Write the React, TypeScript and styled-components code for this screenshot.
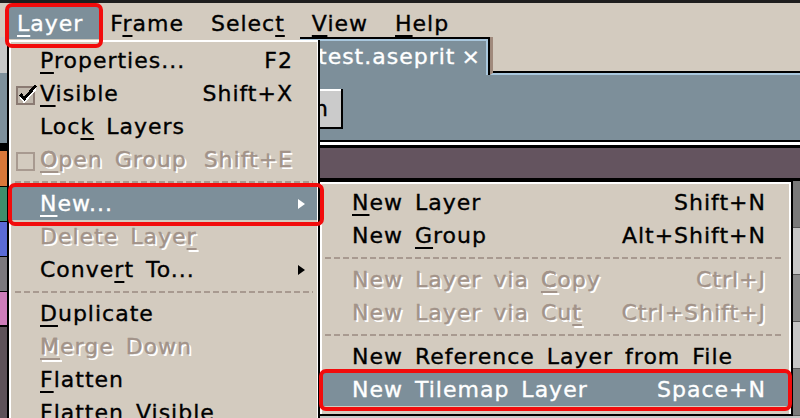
import React from 'react';
import styled, { createGlobalStyle } from 'styled-components';

const colors = {
  face: '#d3cbbf',
  slate: '#7d8f9a',
  ink: '#000000',
  paper: '#ffffff',
  muted: '#a29389',
  dash: '#a89a90',
  plum: '#64545f',
  frost: '#a9c7dd',
  shadow: '#a08a7c',
  red: '#f20c0c',
};

type Mnemonic = [string, string, string];

type Item =
  | 'sep'
  | {
      text: Mnemonic;
      shortcut?: string;
      arrow?: boolean;
      disabled?: boolean;
      check?: 'on' | 'off';
      active?: boolean;
    };

// split a label around the underlined letter
const mn = (label: string, idx = -1): Mnemonic =>
  idx < 0 ? [label, '', ''] : [label.slice(0, idx), label[idx], label.slice(idx + 1)];

const TITLES: { text: Mnemonic; active?: boolean }[] = [
  { text: mn('Layer', 0), active: true },
  { text: mn('Frame', 1) },
  { text: mn('Select', 5) },
  { text: mn('View', 0) },
  { text: mn('Help', 0) },
];

const LAYER_MENU: Item[] = [
  { text: mn('Properties...', 0), shortcut: 'F2' },
  { text: mn('Visible', 0), shortcut: 'Shift+X', check: 'on' },
  { text: mn('Lock Layers', 3) },
  { text: mn('Open Group', 0), shortcut: 'Shift+E', check: 'off', disabled: true },
  'sep',
  { text: mn('New...', 0), arrow: true, active: true },
  { text: mn('Delete Layer', 11), disabled: true },
  { text: mn('Convert To...', 5), arrow: true },
  'sep',
  { text: mn('Duplicate', 0) },
  { text: mn('Merge Down', 0), disabled: true },
  { text: mn('Flatten', 0) },
  { text: mn('Flatten Visible') },
];

const NEW_MENU: Item[] = [
  { text: mn('New Layer', 0), shortcut: 'Shift+N' },
  { text: mn('New Group', 4), shortcut: 'Alt+Shift+N' },
  'sep',
  { text: mn('New Layer via Copy', 14), shortcut: 'Ctrl+J', disabled: true },
  { text: mn('New Layer via Cut', 16), shortcut: 'Ctrl+Shift+J', disabled: true },
  'sep',
  { text: mn('New Reference Layer from File') },
  { text: mn('New Tilemap Layer'), shortcut: 'Space+N', active: true },
];

const SWATCHES: [string, number][] = [
  ['#c8c8c8', 36],
  [colors.slate, 70],
  ['#000', 8],
  ['#d9783a', 35],
  ['#000', 1],
  ['#3f8e6c', 34],
  ['#000', 1],
  ['#5b6bd6', 34],
  ['#000', 1],
  ['#7c787d', 34],
  ['#000', 1],
  ['#ce7dba', 33],
  ['#000', 2],
  ['#5e5259', 120],
];

const TRACKS = ['#7a7a7a', '#c6c6c6', '#8a8a8a', '#c6c6c6', '#7a7a7a', '#c6c6c6'];

const Global = createGlobalStyle`
  html, body {
    margin: 0;
    padding: 0;
    background: #1e1e1e;
  }
  body {
    font-family: 'DejaVu Sans', Verdana, sans-serif;
    font-size: 22px;
    letter-spacing: 1px;
    word-spacing: 4px;
    -webkit-text-stroke: 0.35px currentColor;
  }
`;

const Screen = styled.div`
  position: relative;
  width: 800px;
  height: 418px;
  padding-top: 3px;
  box-sizing: border-box;
  overflow: hidden;
  background: #1e1e1e;
`;

const MenuBar = styled.div`
  display: flex;
  height: 34px;
  padding-left: 8px;
  background: ${colors.face};
`;

const MenuTitle = styled.div<{ $active?: boolean }>`
  position: relative;
  z-index: 2;
  display: flex;
  align-items: center;
  margin: 4px 0 -2px;
  padding: 0 18px 0 9px;
  color: ${(p) => (p.$active ? colors.paper : colors.ink)};
  background: ${(p) => (p.$active ? colors.slate : 'transparent')};
`;

const Key = styled.span`
  text-decoration: underline;
  text-decoration-thickness: 2px;
  text-underline-offset: 4px;
`;

const Workspace = styled.div`
  display: flex;
  height: 381px;
  overflow: hidden;
`;

const ColorStrip = styled.div`
  display: flex;
  flex-direction: column;
  width: 7px;
  flex-shrink: 0;
`;

const Swatch = styled.div<{ $tone: string; $h: number }>`
  flex-shrink: 0;
  height: ${(p) => p.$h}px;
  background: ${(p) => p.$tone};
`;

const Main = styled.div`
  flex: 1;
  display: flex;
  flex-direction: column;
  min-width: 0;
  & > * {
    flex-shrink: 0;
  }
`;

const TabBar = styled.div`
  display: flex;
  height: 38px;
  background: ${colors.face};
`;

const Tab = styled.div`
  display: flex;
  align-items: center;
  margin-left: 293px;
  padding: 0 7px 2px 18px;
  word-spacing: -2px;
  color: ${colors.paper};
  background: ${colors.slate};
  border-top: 2px solid ${colors.ink};
  border-right: 2px solid ${colors.ink};
  box-shadow: inset 0 2px 0 ${colors.frost}, inset -2px 0 0 ${colors.frost};
`;

const TabFill = styled.div`
  flex: 1;
  border-left: 3px solid ${colors.shadow};
  border-bottom: 2px solid ${colors.frost};
  box-shadow: inset 0 -2px 0 ${colors.ink};
`;

const ToolPanel = styled.div`
  display: flex;
  height: 65px;
  padding-top: 14px;
  box-sizing: border-box;
  background: ${colors.slate};
`;

const ToolButton = styled.div`
  display: flex;
  align-items: center;
  justify-content: flex-end;
  width: 81px;
  height: 40px;
  margin-left: 255px;
  padding-right: 12px;
  box-sizing: border-box;
  background: #cbcbcb;
  border-right: 2px solid ${colors.ink};
  border-bottom: 2px solid ${colors.ink};
  box-shadow: inset 2px 2px 0 ${colors.paper};
`;

const Rule = styled.div`
  height: 3px;
  background: ${colors.paper};
  border-top: 2px solid ${colors.ink};
  border-bottom: 3px solid ${colors.ink};
`;

const Band = styled.div`
  height: 30px;
  background: ${colors.plum};
  border-bottom: 3px solid ${colors.ink};
`;

const Timeline = styled.div`
  flex: 1;
  display: flex;
  flex-direction: column;
  min-height: 0;
  overflow: hidden;
`;

const Track = styled.div<{ $tone: string }>`
  height: 46px;
  flex-shrink: 0;
  background: ${(p) => p.$tone};
  border-bottom: 1px solid #555;
`;

const LayerPanel = styled.div`
  position: absolute;
  left: 7px;
  top: 40px;
  width: 313px;
  height: 400px;
  box-sizing: border-box;
  padding: 4px 1px 0 2px;
  background: ${colors.face};
  border-left: 2px solid ${colors.ink};
  border-right: 2px solid ${colors.ink};
  box-shadow: inset 2px 2px 0 ${colors.paper}, inset -1px 0 0 ${colors.paper};
  z-index: 3;
`;

const SubPanel = styled.div`
  position: absolute;
  left: 320px;
  top: 180px;
  width: 473px;
  height: 236px;
  box-sizing: border-box;
  padding: 4px 2px 0 0;
  background: ${colors.face};
  border: 2px solid ${colors.ink};
  border-left: none;
  box-shadow: inset 2px 2px 0 ${colors.paper}, inset -2px 0 0 ${colors.paper};
  z-index: 4;
`;

const Row = styled.div<{ $lead: number; $tail: number; $active?: boolean; $disabled?: boolean }>`
  display: grid;
  grid-template-columns: ${(p) => p.$lead}px 1fr auto ${(p) => p.$tail}px;
  align-items: center;
  height: 33px;
  white-space: nowrap;
  background: ${(p) => (p.$active ? colors.slate : 'transparent')};
  color: ${(p) => (p.$active ? colors.paper : p.$disabled ? colors.muted : colors.ink)};
  text-shadow: ${(p) => (p.$disabled ? `2px 2px 0 ${colors.paper}` : 'none')};
`;

const Lead = styled.div`
  display: flex;
  align-items: center;
  padding-left: 5px;
`;

const Tail = styled.div`
  display: flex;
  align-items: center;
  padding-left: 5px;
`;

const Separator = styled.div<{ $inset: number }>`
  height: 11px;
  display: flex;
  align-items: center;
  padding: 0 ${(p) => p.$inset}px;
  &::after {
    content: '';
    flex: 1;
    height: 2px;
    background: repeating-linear-gradient(90deg, ${colors.dash} 0 6px, transparent 6px 9px);
  }
`;

const Callout = styled.div<{ $x: number; $y: number; $w: number; $h: number }>`
  position: absolute;
  left: ${(p) => p.$x}px;
  top: ${(p) => p.$y}px;
  width: ${(p) => p.$w}px;
  height: ${(p) => p.$h}px;
  box-sizing: border-box;
  border: 4px solid ${colors.red};
  border-radius: 7px;
  z-index: 10;
`;

const CheckIcon = ({ on, color }: { on: boolean; color: string }) => (
  <svg width="22" height="22" viewBox="0 0 8 8" shapeRendering="crispEdges">
    <rect x="0.5" y="1.5" width="6" height="6" fill={on ? '#c2b9ae' : 'none'} stroke={color} strokeWidth="0.8" />
    {on && (
      <>
        <polyline points="1.6,5 3,6.6 7.2,1.8" fill="none" stroke={colors.paper} strokeWidth="1.1" />
        <polyline points="1.6,4.1 3,5.7 7.2,0.9" fill="none" stroke={colors.ink} strokeWidth="1.1" />
      </>
    )}
  </svg>
);

const Arrow = ({ color }: { color: string }) => (
  <svg width="7" height="10" viewBox="0 0 7 10">
    <polygon points="0,0 7,5 0,10" fill={color} />
  </svg>
);

const Label = ({ text }: { text: Mnemonic }) => (
  <span>
    {text[0]}
    {text[1] && <Key>{text[1]}</Key>}
    {text[2]}
  </span>
);

const MenuList = ({ items, lead, tail, inset }: { items: Item[]; lead: number; tail: number; inset: number }) => (
  <>
    {items.map((item, i) => {
      if (item === 'sep') return <Separator key={`sep-${i}`} $inset={inset} />;
      const fg = item.active ? colors.paper : colors.ink;
      return (
        <Row key={item.text.join('')} $lead={lead} $tail={tail} $active={item.active} $disabled={item.disabled}>
          <Lead>{item.check && <CheckIcon on={item.check === 'on'} color={item.disabled ? colors.dash : '#8b7b73'} />}</Lead>
          <Label text={item.text} />
          <span>{item.shortcut}</span>
          <Tail>{item.arrow && <Arrow color={fg} />}</Tail>
        </Row>
      );
    })}
  </>
);

const App = () => {
  return (
    <Screen>
      <Global />
      <MenuBar>
        {TITLES.map((t) => (
          <MenuTitle key={t.text.join('')} $active={t.active}>
            <Label text={t.text} />
          </MenuTitle>
        ))}
      </MenuBar>
      <Workspace>
        <ColorStrip>
          {SWATCHES.map(([tone, h], i) => (
            <Swatch key={`sw-${i}`} $tone={tone} $h={h} />
          ))}
        </ColorStrip>
        <Main>
          <TabBar>
            <Tab>test.aseprit ×</Tab>
            <TabFill />
          </TabBar>
          <ToolPanel>
            {/* only the tail of this button peeks out past the open menu */}
            <ToolButton>n</ToolButton>
          </ToolPanel>
          <Rule />
          <Band />
          <Timeline>
            {TRACKS.map((tone, i) => (
              <Track key={`track-${i}`} $tone={tone} />
            ))}
          </Timeline>
        </Main>
      </Workspace>

      <LayerPanel>
        <MenuList items={LAYER_MENU} lead={29} tail={24} inset={4} />
      </LayerPanel>
      <SubPanel>
        <MenuList items={NEW_MENU} lead={32} tail={23} inset={5} />
      </SubPanel>

      <Callout $x={5} $y={3} $w={98} $h={45} />
      <Callout $x={8} $y={183} $w={316} $h={43} />
      <Callout $x={319} $y={369} $w={473} $h={42} />
    </Screen>
  );
};

export default App;
